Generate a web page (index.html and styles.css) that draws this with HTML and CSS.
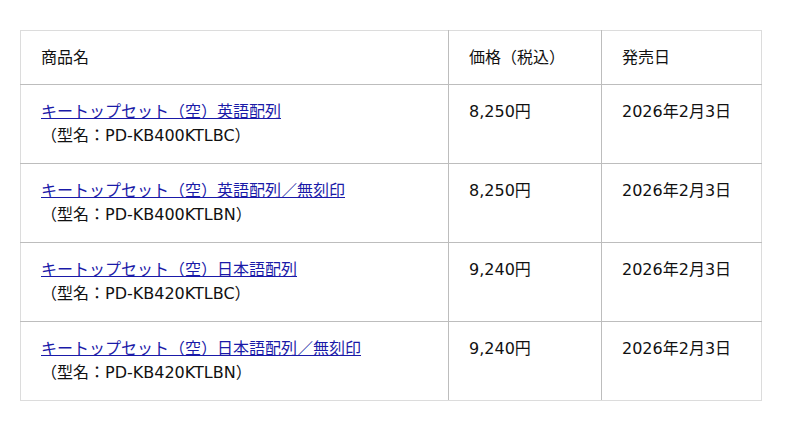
FILE: index.html
```html
<!DOCTYPE html>
<html lang="ja">
<head>
<meta charset="utf-8">
<title>商品一覧</title>
<link rel="stylesheet" href="styles.css">
</head>
<body>
<main class="page">
  <table class="products">
    <thead>
      <tr>
        <th class="col-name">商品名</th>
        <th class="col-price">価格（税込）</th>
        <th class="col-date">発売日</th>
      </tr>
    </thead>
    <tbody>
      <tr>
        <td><a href="#">キートップセット（空）英語配列</a><br>（型名：PD-KB400KTLBC）</td>
        <td>8,250円</td>
        <td>2026年2月3日</td>
      </tr>
      <tr>
        <td><a href="#">キートップセット（空）英語配列／無刻印</a><br>（型名：PD-KB400KTLBN）</td>
        <td>8,250円</td>
        <td>2026年2月3日</td>
      </tr>
      <tr>
        <td><a href="#">キートップセット（空）日本語配列</a><br>（型名：PD-KB420KTLBC）</td>
        <td>9,240円</td>
        <td>2026年2月3日</td>
      </tr>
      <tr>
        <td><a href="#">キートップセット（空）日本語配列／無刻印</a><br>（型名：PD-KB420KTLBN）</td>
        <td>9,240円</td>
        <td>2026年2月3日</td>
      </tr>
    </tbody>
  </table>
</main>
</body>
</html>
```

FILE: styles.css
```css
html, body {
  margin: 0;
  padding: 0;
  background: #ffffff;
}

body {
  font-family: "DejaVu Sans", "Noto Sans CJK JP", sans-serif;
  font-size: 16px;
  line-height: 24px;
  color: #111111;
}

.page {
  padding: 30px 20px;
}

.products {
  width: 742px;
  border-collapse: collapse;
  table-layout: fixed;
  border: 1px solid #dcdcdc;
}

.products th,
.products td {
  padding: 15px 20px;
  text-align: left;
  vertical-align: top;
  font-weight: normal;
  border-right: 1px solid #bdbdbd;
  border-bottom: 1px solid #bdbdbd;
}

.products th {
  padding-bottom: 14px;
}

.products tr > :last-child {
  border-right: 1px solid #dcdcdc;
}

.products tbody tr:last-child td {
  border-bottom: 1px solid #dcdcdc;
}

.col-name { width: 387px; }
.col-price { width: 112px; }
.col-date { width: auto; }

.products a {
  color: #1a1aa8;
  text-decoration: underline;
}
```
